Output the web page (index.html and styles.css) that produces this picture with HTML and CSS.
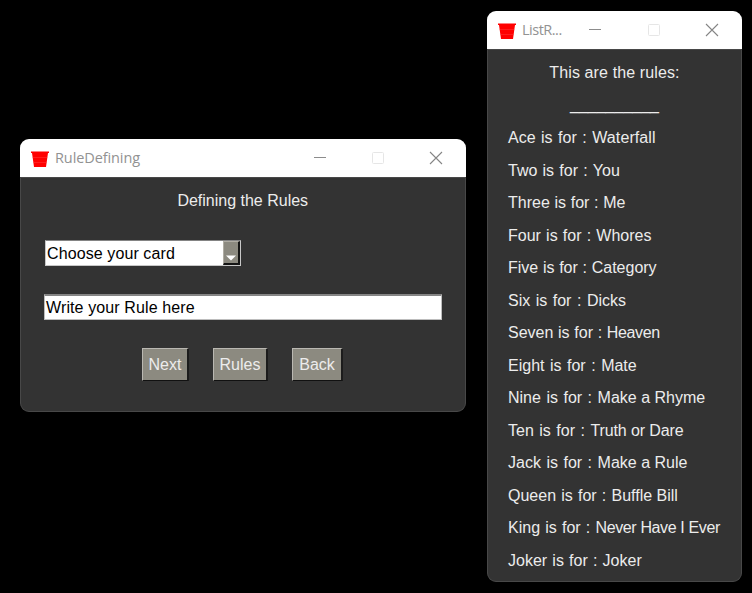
FILE: index.html
```html
<!DOCTYPE html>
<html lang="en">
<head>
<meta charset="utf-8">
<title>RuleDefining</title>
<link rel="stylesheet" href="styles.css">
</head>
<body>
<svg width="0" height="0" class="defs">
  <symbol id="cup" viewBox="0 0 18 17">
    <path d="M0 0.5H18V2H17L15 16H3L1 2H0Z" fill="#ff0000"/>
    <path d="M1.8 6.5H16.2M2.6 11.5H15.4" stroke="#ff3030" stroke-width=".6"/>
  </symbol>
  <symbol id="min" viewBox="0 0 14 14"><path d="M1 6.5H13" stroke="#8c8c8c"/></symbol>
  <symbol id="max" viewBox="0 0 14 14"><rect x="1.5" y="1.5" width="11" height="11" rx="1" fill="none" stroke="#e6e6e6"/></symbol>
  <symbol id="close" viewBox="0 0 14 14"><path d="M1 1L13 13M13 1L1 13" stroke="#858585" stroke-width="1.1"/></symbol>
</svg>

<section class="window define">
  <header class="titlebar">
    <svg class="cup"><use href="#cup"/></svg>
    <span class="title">RuleDefining</span>
    <div class="controls">
      <svg><use href="#min"/></svg>
      <svg><use href="#max"/></svg>
      <svg><use href="#close"/></svg>
    </div>
  </header>
  <main class="form">
    <h1>Defining the Rules</h1>
    <div class="combo">
      <span class="combo-text">Choose your card</span>
      <span class="arrow"><svg viewBox="0 0 10 6"><path d="M0 0.5H10L5 5.5Z" fill="#fff"/></svg></span>
    </div>
    <div class="entry"><span>Write your Rule here</span></div>
    <div class="buttons">
      <div class="button next">Next</div>
      <div class="button rules">Rules</div>
      <div class="button back">Back</div>
    </div>
  </main>
</section>

<section class="window list">
  <header class="titlebar">
    <svg class="cup"><use href="#cup"/></svg>
    <span class="title">ListR...</span>
    <div class="controls">
      <svg><use href="#min"/></svg>
      <svg><use href="#max"/></svg>
      <svg><use href="#close"/></svg>
    </div>
  </header>
  <main class="listing">
    <h1>This are the rules:</h1>
    <div class="rule">__________</div>
    <ul>
      <li class="wide">Ace is for : <span class="loose">Waterfall</span></li>
      <li class="mid">Two is for : <span>You</span></li>
      <li class="slim">Three is for : <span>Me</span></li>
      <li class="mid">Four is for : <span>Whores</span></li>
      <li class="slim">Five is for : <span>Category</span></li>
      <li class="wide">Six is for : <span>Dicks</span></li>
      <li class="slim">Seven is for : <span class="tight">Heaven</span></li>
      <li class="wide">Eight is for : <span>Mate</span></li>
      <li class="wide">Nine is for : <span>Make a Rhyme</span></li>
      <li class="wide">Ten is for : <span class="snug">Truth or Dare</span></li>
      <li class="wide">Jack is for : <span>Make a Rule</span></li>
      <li class="mid">Queen is for : <span>Buffle Bill</span></li>
      <li class="mid">King is for : <span class="tight">Never Have I Ever</span></li>
      <li class="mid">Joker is for : <span>Joker</span></li>
    </ul>
  </main>
</section>
</body>
</html>
```

FILE: styles.css
```css
* { box-sizing: border-box; }
body {
  margin: 0;
  width: 752px;
  height: 593px;
  overflow: hidden;
  position: relative;
  background: #000;
  font: 16px/20px "Liberation Sans", Arial, sans-serif;
  color: #ececec;
}
.defs { position: absolute; }
.window {
  position: absolute;
  background: #333;
  border-radius: 9px;
  overflow: hidden;
}
.window::after {
  content: "";
  position: absolute;
  inset: 38px 0 0;
  border: 1px solid #484848;
  border-radius: 0 0 9px 9px;
}
.define { left: 20px; top: 139px; width: 446px; height: 273px; }
.list { left: 487px; top: 11px; width: 255px; height: 571px; }
.titlebar {
  display: flex;
  align-items: center;
  height: 38px;
  padding-left: 11px;
  background: #fff;
}
.cup { width: 18px; height: 17px; margin-top: 3px; }
.title {
  margin-left: 6px;
  font: 14.5px/20px "Open Sans", "Noto Sans", sans-serif;
  letter-spacing: -0.1px;
  color: #929292;
}
.list .title { letter-spacing: -0.5px; }
.controls {
  display: flex;
  gap: 44px;
  margin-left: auto;
  padding-right: 23px;
}
.list .controls { gap: 44.5px; }
.controls svg { width: 14px; height: 14px; }
h1 { margin: 0; font-size: 16px; font-weight: normal; line-height: 20px; text-align: center; }
.form { padding: 14px 24px 0 23.5px; }
.list h1 { letter-spacing: 0.12px; }
.combo {
  display: flex;
  width: 196px;
  height: 26px;
  margin: 29px 0 0 1.5px;
  background: #fff;
  border: 1px solid #c8c8c8;
  border-top-color: #848484;
  color: #000;
}
.combo-text { flex: 1; padding: 3px 0 0 1px; letter-spacing: 0.1px; }
.arrow {
  display: flex;
  justify-content: center;
  width: 17px;
  border: 1px solid #b0ada4;
  border-right: 2px solid #151515;
  border-bottom: 2px solid #151515;
  background: #8c8a80;
}
.arrow svg { width: 10px; height: 6px; margin-top: 13px; }
.entry {
  height: 26px;
  margin-top: 28px;
  padding: 2px 0 0 1.5px;
  border: 1px solid #bdbdbd;
  border-top: 2px solid #858585;
  background: #fff;
  color: #000;
  letter-spacing: 0.12px;
}
.buttons { display: flex; gap: 24px; margin: 28px 0 0 98.5px; }
.button {
  height: 33px;
  padding-top: 6px;
  text-align: center;
  background: #8c8a80;
  border: 1px solid #bab8b2;
  border-right: 2px solid #1c1c1c;
  border-bottom-color: #111;
}
.next { width: 47px; }
.rules { width: 55px; }
.back { width: 51px; }
.listing { padding-top: 14px; }
.rule { height: 20px; margin-top: 12px; text-align: center; }
ul { list-style: none; margin: 7px 0 0; padding: 0 0 0 21px; }
li { height: 32.54px; line-height: 31.6px; white-space: nowrap; }
li span { word-spacing: 0; }
.slim { word-spacing: 0.25px; }
.mid { word-spacing: 0.75px; }
.wide { word-spacing: 1.05px; }
.loose { letter-spacing: 0.1px; }
.snug { letter-spacing: -0.12px; }
.tight { letter-spacing: -0.37px; }
```
